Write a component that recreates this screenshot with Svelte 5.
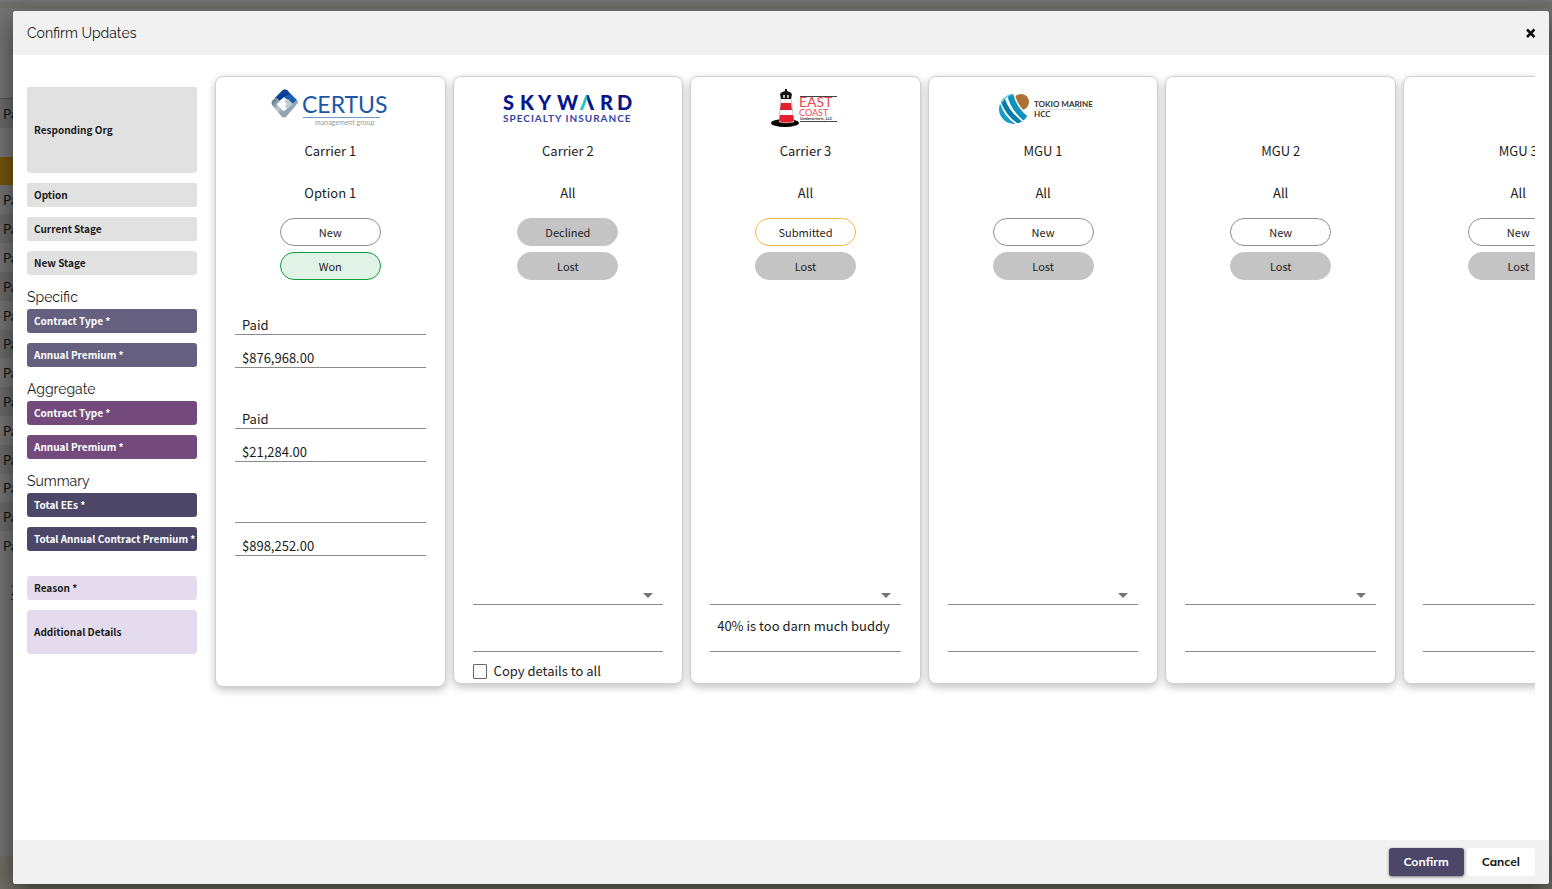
<script lang="ts">
	type Card = {
		org: string;
		logo?: string;
		option: string;
		stage: string;
		next: string;
		details?: string;
		copy?: boolean;
	};

	const cards: Card[] = [
		{ org: "Carrier 1", logo: "certus", option: "Option 1", stage: "New", next: "Won" },
		{ org: "Carrier 2", logo: "skyward", option: "All", stage: "Declined", next: "Lost", copy: true },
		{
			org: "Carrier 3",
			logo: "eastcoast",
			option: "All",
			stage: "Submitted",
			next: "Lost",
			details: "40% is too darn much buddy",
		},
		{ org: "MGU 1", logo: "tokio", option: "All", stage: "New", next: "Lost" },
		{ org: "MGU 2", option: "All", stage: "New", next: "Lost" },
		{ org: "MGU 3", option: "All", stage: "New", next: "Lost" },
	];

	const groups = [
		{ title: "Specific", tone: "specific", rows: ["Contract Type *", "Annual Premium *"], values: ["Paid", "$876,968.00"] },
		{ title: "Aggregate", tone: "aggregate", rows: ["Contract Type *", "Annual Premium *"], values: ["Paid", "$21,284.00"] },
		{ title: "Summary", tone: "summary", rows: ["Total EEs *", "Total Annual Contract Premium *"], values: ["", "$898,252.00"] },
	];

	const rows = ["Pa", "", "gold", ...Array(13).fill("Pa")];
</script>

<div class="page" aria-hidden="true">
	<div class="topbar"></div>
	<div class="rows">
		{#each rows as row}
			<div class="row" class:gold={row === "gold"}>{row === "gold" ? "" : row}</div>
		{/each}
	</div>
	<div class="pager"><span>2</span></div>
	<div class="bottombar"></div>
</div>

<div class="backdrop">
	<div class="modal" role="dialog" aria-labelledby="modal-title">
		<header>
			<h2 id="modal-title">Confirm Updates</h2>
			<button class="close" aria-label="Close">
				<svg width="10" height="10" viewBox="0 0 10 10"><path d="M2 1.500l7.500 7.500M9.500 1.500L2 9" stroke="#111" stroke-width="2.600" /></svg>
			</button>
		</header>

		<div class="body">
			<div class="labels">
				<div class="label org">Responding Org</div>
				<div class="label">Option</div>
				<div class="label">Current Stage</div>
				<div class="label">New Stage</div>
				{#each groups as group}
					<h3>{group.title}</h3>
					{#each group.rows as row}
						<div class="label {group.tone}">{row}</div>
					{/each}
				{/each}
				<div class="label reason">Reason *</div>
				<div class="label details">Additional Details</div>
			</div>

			<div class="cards">
				{#each cards as card, i}
					<section class="card" class:won={card.next === "Won"}>
						<div class="logo">
							{#if card.logo === "certus"}
								<svg width="120" height="40" viewBox="0 0 120 40" role="img" aria-label="Certus management group">
									<defs>
										<linearGradient id="steel" x1="0" y1="0" x2="1" y2="1">
											<stop offset="0" stop-color="#3d6377" />
											<stop offset=".5" stop-color="#b9c8d0" />
											<stop offset="1" stop-color="#6d8796" />
										</linearGradient>
									</defs>
									<path d="M13 1q2-1 4 0l10 10-4 5-9-8-5 4-4-3z" fill="#1c5fb2" />
									<path d="M13 1q2-1 4 0l3 4-6 3-5 4-4-3z" fill="#0b3f94" />
									<path d="M6 8l4 4-3 4 9 8-3 5L2 16q-1-2 0-4z" fill="url(#steel)" />
									<path d="M27 11q2 2 0 4L16 28q-2 1-4-1l-4-4 6-1 9-8z" fill="#90a5b1" />
									<path d="M14 9l8 6-8 7-7-7z" fill="#fff" />
									<path d="M14 12l4-2 5 5-6 5-2-3 2-2z" fill="#bccbd3" />
									<text x="32" y="24" class="certus-name">CERTUS</text>
									<path d="M33 28.500h77" stroke="#6f9bcb" />
									<text x="45" y="36" class="certus-sub">management group</text>
								</svg>
							{:else if card.logo === "skyward"}
								<svg width="130" height="32" viewBox="0 0 130 32" role="img" aria-label="Skyward Specialty Insurance">
									<defs>
										<linearGradient id="peak" gradientUnits="userSpaceOnUse" x1="76" y1="0" x2="92" y2="0">
											<stop offset=".52" stop-color="#12c7c5" />
											<stop offset=".52" stop-color="#06178c" />
										</linearGradient>
									</defs>
									<text y="17" class="sky-name"><tspan x="0 17 35 54">SKYW</tspan><tspan x="77" fill="url(#peak)">Λ</tspan><tspan x="97 114">RD</tspan></text>
									<text x="0" y="29" class="sky-sub">SPECIALTY INSURANCE</text>
								</svg>
							{:else if card.logo === "eastcoast"}
								<svg width="68" height="40" viewBox="0 0 68 40" role="img" aria-label="East Coast Underwriters, LLC">
									<ellipse cx="14" cy="34" rx="14" ry="4" fill="#050505" />
									<path d="M10 9h10l3 24q-8 2-15 0z" fill="#fff" stroke="#888" stroke-width=".5" />
									<path d="M10 14h10l1 7H9z" fill="#e5202d" />
									<path d="M9 26h13l1 6q-8 3-15 0z" fill="#e5202d" />
									<path d="M9 5q1-2 5-3V0h2v2q4 1 5 3l-1 5H10z" fill="#111" />
									<path d="M12 6h2v3h-2zM16 6h2v3h-2z" fill="#bbb" />
									<path d="M29 7.500h37M29 32.500h37" stroke="#444" />
									<text x="28" y="18" class="east">EAST</text>
									<text x="28" y="27" class="coast">COAST</text>
									<text x="29" y="31" class="east-sub">Underwriters, LLC</text>
								</svg>
							{:else if card.logo === "tokio"}
								<svg width="96" height="34" viewBox="-4 0 96 34" role="img" aria-label="Tokio Marine HCC">
									<defs>
										<clipPath id="globe"><circle cx="15" cy="17" r="15" /></clipPath>
									</defs>
									<circle cx="22" cy="10" r="8" fill="#ad7138" />
									<g clip-path="url(#globe)" fill="none">
										<path d="M-1 13q4 13 16 21" stroke="#149cc5" stroke-width="5" />
										<path d="M3 6q6 18 20 25" stroke="#087da7" stroke-width="5" />
										<path d="M11 1q2 14 16 26" stroke="#fff" stroke-width="9" />
										<path d="M11 1q2 14 16 26" stroke="#0d91bd" stroke-width="6" />
										<path d="M2 10q4-7 12-9" stroke="#76c9df" stroke-width="3" />
									</g>
									<text x="35" y="15" class="tokio">TOKIO MARINE</text>
									<path d="M36 17.500h57" stroke="#ddd" />
									<text x="35" y="25" class="tokio">HCC</text>
								</svg>
							{/if}
						</div>
						<p>{card.org}</p>
						<p class="option">{card.option}</p>
						<div class="stages">
							<span class="pill {card.stage.toLowerCase()}">{card.stage}</span>
							<span class="pill {card.next.toLowerCase()}">{card.next}</span>
						</div>

						<div class="figures">
							{#if card.next === "Won"}
								{#each groups as group}
									<div class="pair">
										{#each group.values as value, j}
											<input type="text" {value} aria-label="{group.title} {group.rows[j]}" />
										{/each}
									</div>
								{/each}
							{/if}
						</div>

						{#if card.next === "Lost"}
							<div class="select">
								<select aria-label="Reason for {card.org}"><option value=""></option></select>
								<svg width="10" height="5" viewBox="0 0 10 5"><path d="M0 0h10L5 5z" fill="#757575" /></svg>
							</div>
							<textarea aria-label="Additional details for {card.org}" value={card.details ?? ""}></textarea>
							<div class="copy">
								{#if card.copy}
									<input type="checkbox" id="copy-{i}" />
									<label for="copy-{i}">Copy details to all</label>
								{/if}
							</div>
						{/if}
					</section>
				{/each}
			</div>
		</div>

		<footer>
			<button class="confirm">Confirm</button>
			<button class="cancel">Cancel</button>
		</footer>
	</div>
</div>

<style>
	:global(body) {
		margin: 0;
		background: #fff;
		overflow: hidden;
		font-family: "Noto Sans CJK SC", "Noto Sans", sans-serif;
		font-size: 13px;
		color: #1c1c1c;
	}

	.page {
		position: fixed;
		inset: 0;
		display: flex;
		flex-direction: column;
		background: #fafafa;
	}

	.topbar {
		height: 6px;
		margin-top: 2px;
		margin-bottom: 90px;
		background: #f0f0e6;
	}

	.rows {
		display: grid;
		grid-template-rows: repeat(16, 1fr);
		height: 461px;
		width: 50%;
		border-top: 1px solid #bbb;
	}

	.row {
		display: flex;
		align-items: center;
		padding-left: 3px;
		overflow: hidden;
	}

	.row:nth-child(odd) {
		background: #e8e8e8;
	}

	.row.gold {
		background: #ffb91f;
	}

	.pager {
		margin: 20px 11px;
	}

	.pager span {
		border-bottom: 1px solid #555;
	}

	.bottombar {
		height: 33px;
		margin-top: auto;
		background: #f0eedf;
	}

	.backdrop {
		position: fixed;
		inset: 0;
		display: flex;
		padding: 11px 3px 5px 13px;
		background: rgba(0, 0, 0, 0.54);
	}

	.modal {
		flex: 1;
		min-width: 0;
		display: flex;
		flex-direction: column;
		background: #fff;
		border-radius: 3px;
		overflow: hidden;
		box-shadow: 0 8px 24px rgba(0, 0, 0, 0.5);
	}

	header,
	footer {
		display: flex;
		align-items: center;
		height: 44px;
		padding: 0 14px;
		background: #f1f1f1;
	}

	header {
		justify-content: space-between;
	}

	h2,
	h3 {
		margin: 0;
		font-family: Raleway, Lato, sans-serif;
		font-size: 14px;
		font-weight: 400;
		line-height: 24px;
	}

	button {
		border: 0;
		padding: 0;
		font-family: Mulish, "Open Sans", sans-serif;
		font-weight: 700;
	}

	.close {
		display: flex;
		padding: 4px 0;
		background: none;
	}

	.body {
		flex: 1;
		min-height: 0;
		display: flex;
		padding: 0 14px;
	}

	.labels {
		flex: 0 0 170px;
		min-width: 0;
		padding-top: 32px;
	}

	.label {
		display: flex;
		align-items: center;
		box-sizing: border-box;
		height: 24px;
		margin-bottom: 10px;
		padding: 0 0 2px 7px;
		border-radius: 3px;
		background: #e1e1e1;
		font-size: 10px;
		font-weight: 700;
		white-space: nowrap;
	}

	.label.org {
		height: 86px;
	}

	.label.specific {
		background: #655f80;
		color: #fff;
	}

	.label.aggregate {
		background: #734a7b;
		color: #fff;
	}

	.label.summary {
		background: #4c4669;
		color: #fff;
	}

	.label.reason,
	.label.details {
		background: #e4dcec;
	}

	.label.reason {
		margin-top: 25px;
	}

	.label.details {
		height: 44px;
	}

	.cards {
		flex: 1;
		min-width: 0;
		display: grid;
		grid-auto-flow: column;
		grid-auto-columns: 18%;
		align-items: start;
		margin-left: 10px;
		padding: 21px 0 0 8px;
		overflow: auto;
		scrollbar-width: none;
	}

	.card {
		display: flex;
		flex-direction: column;
		margin-right: 7px;
		padding: 0 19px;
		border: 1px solid #d0d0d0;
		border-radius: 8px;
		background: #fff;
		box-shadow: 0 3px 8px rgba(0, 0, 0, 0.25);
	}

	.card.won {
		padding-bottom: 130px;
	}

	.logo {
		display: flex;
		align-items: center;
		justify-content: center;
		height: 63px;
	}

	.logo svg {
		overflow: visible;
	}

	p {
		margin: 0;
		line-height: 21px;
		text-align: center;
	}

	.option {
		margin: 21px 0 15px;
	}

	.stages {
		display: flex;
		flex-direction: column;
		align-items: center;
		gap: 6px;
	}

	.pill {
		box-sizing: border-box;
		width: 101px;
		border: 1px solid #8e8e8e;
		border-radius: 14px;
		font-size: 11px;
		line-height: 26px;
		text-align: center;
	}

	.pill.declined,
	.pill.lost {
		border-color: #c4c4c4;
		background: #c4c4c4;
	}

	.pill.submitted {
		border-color: #f5b83d;
	}

	.pill.won {
		border-color: #0a9f3c;
		background: #e1f3e6;
	}

	.figures {
		display: flex;
		flex-direction: column;
		gap: 37px;
		min-height: 244px;
		margin-top: 31px;
	}

	.pair {
		display: flex;
		flex-direction: column;
		gap: 9px;
	}

	input[type="text"],
	select,
	textarea {
		box-sizing: border-box;
		width: 100%;
		height: 24px;
		padding: 4px 7px 0;
		border: 0;
		border-bottom: 1px solid #8b8b8b;
		border-radius: 0;
		background: none;
		color: inherit;
		font: inherit;
		line-height: 19px;
	}

	.select {
		position: relative;
		margin-top: 26px;
	}

	select {
		display: block;
		appearance: none;
	}

	.select svg {
		position: absolute;
		right: 10px;
		bottom: 7px;
	}

	textarea {
		display: block;
		height: 40px;
		margin-top: 7px;
		resize: none;
		overflow: hidden;
	}

	.copy {
		display: flex;
		align-items: center;
		gap: 7px;
		height: 18px;
		margin-top: 10px;
		padding-bottom: 3px;
		line-height: 18px;
	}

	.copy input {
		appearance: none;
		box-sizing: border-box;
		width: 14px;
		height: 15px;
		margin: 0;
		border: 1px solid #666;
		border-radius: 1px;
	}

	footer {
		justify-content: flex-end;
		gap: 3px;
	}

	footer button {
		height: 28px;
		padding: 0 15px 2px;
		border-radius: 3px;
		font-size: 12px;
	}

	.confirm {
		background: #4c4669;
		color: #fff;
		box-shadow: 0 1px 3px rgba(0, 0, 0, 0.5);
	}

	.cancel {
		background: #fff;
		color: #111;
	}

	svg text {
		font-family: Lato, sans-serif;
	}

	.certus-name {
		fill: #1c57a5;
		font-size: 23px;
	}

	.certus-sub {
		fill: #9a9a9a;
		font-size: 7px;
	}

	.sky-name {
		fill: #06178c;
		font-size: 20px;
		font-weight: 900;
	}

	.sky-sub {
		fill: #3442a8;
		font-size: 10px;
		font-weight: 700;
		letter-spacing: 1px;
	}

	.east,
	.coast {
		fill: #ec4a50;
		font-size: 14px;
	}

	.coast {
		font-size: 9px;
	}

	.east-sub {
		fill: #333;
		font-size: 4px;
		font-weight: 700;
	}

	.tokio {
		fill: #333;
		font-size: 8px;
		font-weight: 700;
	}
</style>
